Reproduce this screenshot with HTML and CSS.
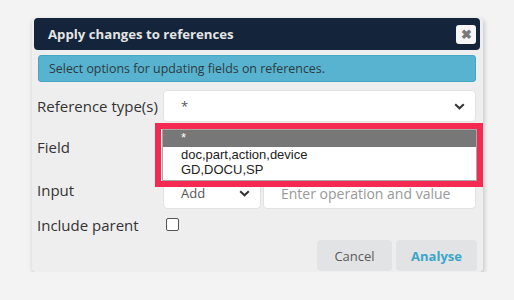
FILE: index.html
```html
<!DOCTYPE html>
<html lang="en">
<head>
  <meta charset="UTF-8">
  <title>Apply changes to references</title>
  <link rel="stylesheet" href="styles.css">
</head>
<body>
  <div class="dialog">
    <div class="dialog-header">
      <span class="dialog-title">Apply changes to references</span>
      <button class="close-btn">&#10006;</button>
    </div>
    <div class="info-bar">Select options for updating fields on references.</div>

    <div class="form">
      <label class="row-label row-ref">Reference type(s)</label>
      <div class="control-wrap row-ref">
        <div class="select-box">
          <span>*</span>
          <svg class="chev" width="11" height="7" viewBox="0 0 11 7"><path d="M1.2 1.2 L5.5 5.3 L9.8 1.2" fill="none" stroke="#333" stroke-width="2"/></svg>
        </div>
        <div class="list-frame"></div>
        <div class="listbox">
          <div class="opt opt-active">*</div>
          <div class="opt">doc,part,action,device</div>
          <div class="opt">GD,DOCU,SP</div>
        </div>
      </div>

      <label class="row-label row-field">Field</label>
      <div class="control-wrap row-field">
        <div class="select-box"></div>
      </div>

      <label class="row-label row-input">Input</label>
      <div class="control-wrap row-input input-group">
        <div class="select-box small">
          <span>Add</span>
          <svg class="chev" width="11" height="7" viewBox="0 0 11 7"><path d="M1.2 1.2 L5.5 5.3 L9.8 1.2" fill="none" stroke="#333" stroke-width="2"/></svg>
        </div>
        <input type="text" class="text-input" placeholder="Enter operation and value">
      </div>

      <label class="row-label row-check">Include parent</label>
      <div class="control-wrap row-check">
        <span class="checkbox"></span>
      </div>
    </div>

    <div class="actions">
      <button class="btn btn-cancel">Cancel</button>
      <button class="btn btn-primary">Analyse</button>
    </div>
  </div>
</body>
</html>
```

FILE: styles.css
```css
* { box-sizing: border-box; }
body {
  margin: 0;
  background: #f3f3f3;
  font-family: 'Open Sans', sans-serif;
  color: #333;
}
.dialog {
  margin: 18px 0 0 32px;
  width: 451px;
  height: 254px;
  background: #eeeeee;
  border-radius: 4px;
  box-shadow: 1px 2px 5px rgba(0,0,0,0.22);
  padding: 0 3px 0 2px;
}
.dialog-header {
  height: 32px;
  background: #13243b;
  border-radius: 4px;
  display: flex;
  align-items: center;
  justify-content: space-between;
  padding: 0 4px 0 14px;
}
.dialog-title {
  color: #e4e4e4;
  font-weight: 700;
  font-size: 13.2px;
}
.close-btn {
  width: 20px;
  height: 19px;
  border: none;
  border-radius: 3px;
  background: #f7f7f7;
  color: #7a7a7a;
  font-size: 13px;
  font-weight: 700;
  padding: 0;
  line-height: 19px;
}
.info-bar {
  margin: 5px 4px 0 4px;
  height: 27px;
  background: #57b3cf;
  border: 1px solid #44a6c5;
  border-radius: 3px;
  font-size: 12.4px;
  line-height: 25px;
  padding-left: 10px;
  color: #2f3a40;
}
.form {
  display: grid;
  grid-template-columns: 126px 313px;
  padding-left: 3px;
}
.row-label {
  font-size: 15px;
  color: #333;
  display: flex;
  align-items: center;
}
.row-ref { margin-top: 8px; height: 32px; }
.row-field { margin-top: 9px; height: 32px; }
.row-input { margin-top: 14px; height: 32px; }
.row-label.row-input { padding-bottom: 6px; }
.row-check { margin-top: 8px; height: 16px; }
.control-wrap { position: relative; }
.select-box {
  height: 32px;
  background: #fff;
  border: 1px solid #e2e2e2;
  border-radius: 4px;
  display: flex;
  align-items: center;
  justify-content: space-between;
  padding: 0 10px 0 17px;
  font-size: 13px;
  color: #555;
}
.select-box.small { width: 98px; }
.input-group { display: flex; gap: 2px; }
.text-input {
  flex: 1;
  height: 32px;
  border: 1px solid #e2e2e2;
  border-radius: 4px;
  padding: 0 0 0 17px;
  font-family: 'Open Sans', sans-serif;
  font-size: 14px;
  background: #fff;
}
.text-input::placeholder { color: #999; }
.checkbox {
  display: block;
  width: 13px;
  height: 13px;
  margin: 1px 0 0 3px;
  border: 1px solid #555;
  border-radius: 2px;
  background: #fff;
}
.listbox {
  position: absolute;
  left: -1px;
  top: 39px;
  width: 315px;
  height: 52px;
  background: #fff;
  border: 1px solid #a8a8a8;
  z-index: 3;
  font-family: 'Liberation Sans', Arial, sans-serif;
  font-size: 13px;
  color: #222;
}
.opt {
  height: 15px;
  line-height: 15px;
  padding-left: 18px;
}
.opt-active {
  height: 17px;
  background: #777;
  color: #fff;
}
.list-frame {
  position: absolute;
  left: -8px;
  top: 33px;
  width: 328px;
  height: 64px;
  border: 6px solid #f42a52;
  z-index: 4;
}
.actions {
  display: flex;
  justify-content: flex-end;
  gap: 4px;
  margin: 7px 3px 0 0;
}
.btn {
  height: 31px;
  border: none;
  border-radius: 4px;
  background: #e2e3e5;
  font-family: 'Open Sans', sans-serif;
  font-size: 13px;
}
.btn-cancel { width: 75px; color: #5a5a5a; }
.btn-primary { width: 81px; color: #3ca6c9; font-weight: 700; }
```
